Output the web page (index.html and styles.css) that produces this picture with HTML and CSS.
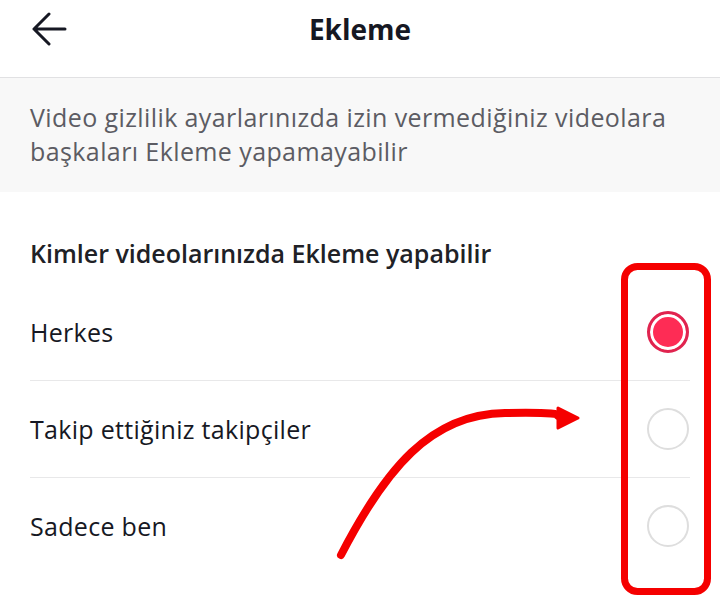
FILE: index.html
```html
<!DOCTYPE html>
<html lang="tr">
<head>
  <meta charset="UTF-8" />
  <meta name="viewport" content="width=device-width, initial-scale=1.0" />
  <title>Ekleme</title>
  <link rel="stylesheet" href="styles.css">
</head>
<body>
  <div class="screen">
    <div class="top-bar">
      <button class="back-btn" aria-label="Geri">
        <svg width="36" height="34" viewBox="0 0 36 34">
          <path d="M34 17H3M18 2L3 17L18 32" fill="none" stroke="#161823" stroke-width="3" stroke-linecap="round" stroke-linejoin="round"/>
        </svg>
      </button>
      <div class="top-title">Ekleme</div>
    </div>

    <div class="notice">Video gizlilik ayarlarınızda izin vermediğiniz videolara<br>başkaları Ekleme yapamayabilir</div>

    <div class="section-title">Kimler videolarınızda Ekleme yapabilir</div>

    <div class="option-list">
      <div class="option">
        <span>Herkes</span>
        <span class="radio checked"></span>
      </div>
      <div class="option">
        <span>Takip ettiğiniz takipçiler</span>
        <span class="radio"></span>
      </div>
      <div class="option">
        <span>Sadece ben</span>
        <span class="radio"></span>
      </div>
    </div>

    <!-- red markup drawn over the screenshot -->
    <svg class="markup" width="720" height="610" viewBox="0 0 720 610">
      <rect x="624.5" y="266.5" width="83" height="325" rx="13" fill="none" stroke="#f50000" stroke-width="7"/>
      <path d="M341 555C385 470 430 414 505 413S548 416 562 417" fill="none" stroke="#f50000" stroke-width="8" stroke-linecap="round"/>
      <path d="M558 408L578 418L558 428Z" fill="#f50000" stroke="#f50000" stroke-width="3" stroke-linejoin="round"/>
    </svg>
  </div>
</body>
</html>
```

FILE: styles.css
```css
body {
  margin: 0;
  background: #fff;
  font-family: "Open Sans", "Noto Sans", sans-serif;
  color: #161823;
}
.screen {
  position: relative;
  width: 720px;
  height: 610px;
  overflow: hidden;
}
.top-bar {
  height: 77px;
  border-bottom: 1px solid #e1e1e3;
  display: flex;
  align-items: center;
  justify-content: center;
  position: relative;
}
.back-btn {
  position: absolute;
  left: 31px;
  top: 12px;
  background: none;
  border: none;
  padding: 0;
  line-height: 0;
}
.top-title {
  font-size: 28px;
  font-weight: 700;
  margin-top: -20px;
}
.notice {
  background: #f8f8f8;
  color: #5c5c63;
  font-size: 25px;
  letter-spacing: 0.4px;
  line-height: 34px;
  padding: 22px 30px 24px;
  white-space: nowrap;
}
.section-title {
  font-size: 25px;
  font-weight: 600;
  line-height: 30px;
  padding: 46px 30px 16px;
  color: #202126;
}
.option-list {
  margin: 0 30px;
}
.option {
  height: 96px;
  display: flex;
  align-items: center;
  justify-content: space-between;
  font-size: 25px;
  letter-spacing: 0.3px;
  border-bottom: 1px solid #e8e8e9;
}
.option:last-child {
  border-bottom: none;
}
.radio {
  width: 38px;
  height: 38px;
  border: 2px solid #dedede;
  border-radius: 50%;
  margin-right: 1px;
  box-sizing: content-box;
}
.radio.checked {
  width: 36px;
  height: 36px;
  border: 3px solid #e0244f;
  background: #fe2c55;
  box-shadow: inset 0 0 0 3px #fff;
}
.markup {
  position: absolute;
  left: 0;
  top: 0;
  pointer-events: none;
}
```
